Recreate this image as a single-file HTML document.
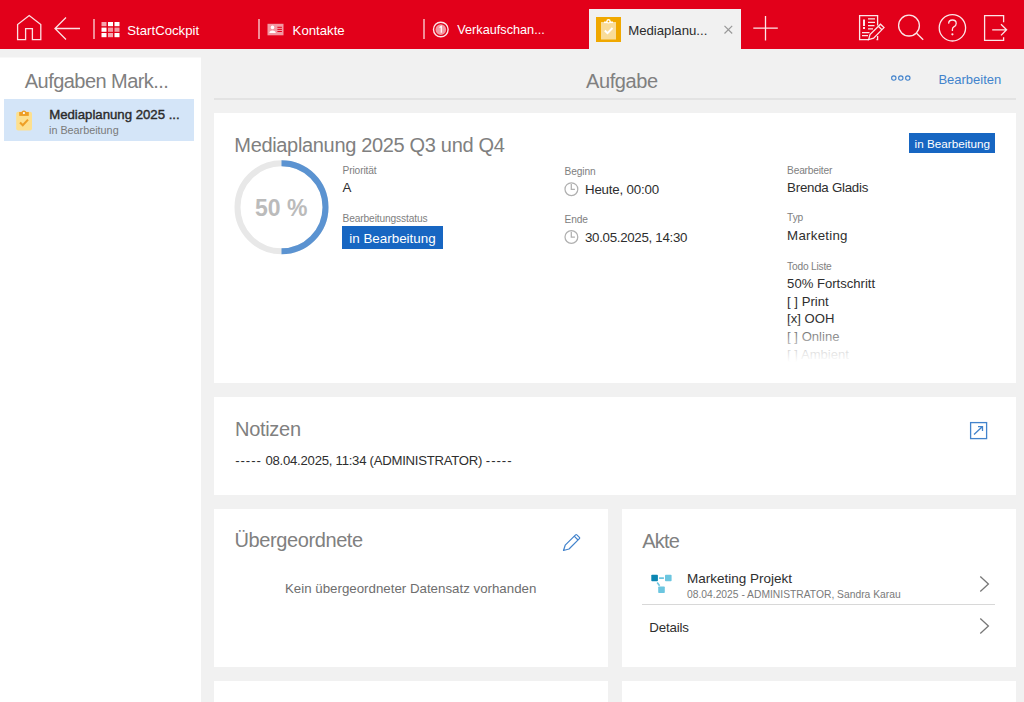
<!DOCTYPE html>
<html><head><meta charset="utf-8">
<style>
*{margin:0;padding:0;box-sizing:border-box}
html,body{width:1024px;height:702px;overflow:hidden;background:#f1f1f1;font-family:"Liberation Sans",sans-serif;color:#222;position:relative}
.abs{position:absolute}
.t{position:absolute;white-space:nowrap;line-height:1}
</style></head><body>
<div class="abs" style="left:0;top:0;width:1024px;height:49px;background:#e2001a"></div>
<svg class="abs" style="left:0;top:0" width="1024" height="49">
<g fill="none" stroke="rgba(255,255,255,.88)" stroke-width="1.3" stroke-linejoin="miter">
<path d="M17.6 39.6 V24.6 L29.2 15.6 L40.8 24.6 V39.6 H32.4 V28.6 H25.6 V39.6 Z"/>
<path d="M80 28.5 H55.5 M66 17.5 L55 28.5 L66 39.5"/>
</g>
<g fill="rgba(255,255,255,.55)">
<rect x="93" y="19" width="2" height="20"/>
<rect x="258" y="19" width="2" height="20"/>
<rect x="423" y="19" width="2" height="20"/>
</g>
<!-- grid -->
<g>
<rect x="101.5" y="22" width="5" height="4.2" fill="rgba(255,255,255,.65)"/>
<rect x="108" y="22" width="5" height="4.2" fill="#fff"/>
<rect x="114.5" y="22" width="5" height="4.2" fill="#fff"/>
<rect x="101.5" y="27.6" width="5" height="4.2" fill="#fff"/>
<rect x="108" y="27.6" width="5" height="4.2" fill="rgba(255,255,255,.6)"/>
<rect x="114.5" y="27.6" width="5" height="4.2" fill="rgba(255,255,255,.6)"/>
<rect x="101.5" y="33" width="5" height="4.2" fill="#fff"/>
<rect x="108" y="33" width="5" height="4.2" fill="rgba(255,255,255,.65)"/>
<rect x="114.5" y="33" width="5" height="4.2" fill="#fff"/>
</g>
<!-- contact card -->
<rect x="267.5" y="23.8" width="16" height="11.5" fill="rgba(255,255,255,.6)"/>
<circle cx="272.5" cy="27.4" r="1.8" fill="#fff"/>
<path d="M269.4 33 Q269.4 30.4 272.5 30.4 Q275.7 30.4 275.7 33 Z" fill="#fff"/>
<g stroke="#e2001a" stroke-width="1"><path d="M277.4 27.3 H281.9 M277.4 29.4 H281.9 M277.4 31.5 H281.9"/></g>
<!-- circle badge -->
<circle cx="440.8" cy="29.5" r="7.3" fill="none" stroke="rgba(255,255,255,.9)" stroke-width="1.4"/>
<circle cx="440.8" cy="29.6" r="5.3" fill="rgba(255,255,255,.6)"/>
<path d="M439.5 27.5 L441.3 26.3 V32.8" stroke="#fff" stroke-width="1.2" fill="none"/>
<!-- active tab -->
<rect x="589" y="9" width="152" height="40" fill="#f1f1f1"/>
<rect x="596" y="17" width="25" height="25" fill="#f0a800"/>
<rect x="601" y="22" width="15" height="17.5" fill="rgba(255,255,255,.6)"/>
<path d="M604 22.3 H613" stroke="#fff" stroke-width="1.6"/>
<circle cx="608.5" cy="21.2" r="2.2" fill="#fff"/>
<circle cx="608.5" cy="21.4" r="0.9" fill="#f0a800"/>
<path d="M604.8 30.5 L607.5 33.2 L612.5 28" fill="none" stroke="#fff" stroke-width="1.9"/>
<path d="M724.5 25.8 L732.2 33.5 M732.2 25.8 L724.5 33.5" stroke="#999" stroke-width="1.2"/>
<path d="M753.3 28.2 H777.8 M765.5 16 V40.4" stroke="rgba(255,255,255,.9)" stroke-width="1.3"/>
<!-- right icons -->
<g fill="none" stroke="rgba(255,255,255,.9)" stroke-width="1.3">
<path d="M869 39.6 H859.6 V15.6 H877.6 V25.5"/>
<path d="M876.5 39.6 H877.6 V36"/>
<path d="M868 18.8 H875 M868 22.3 H875 M868 25.6 H874.5 M868 28.9 H873 M862 32.6 H869.5 M862 35.6 H868"/>
<path d="M868.6 39.6 L870 34.6 L880.5 24.2 L884 27.6 L873.6 38.2 Z M878.4 26.3 L881.9 29.7"/>
<circle cx="909" cy="25.6" r="10.4"/>
<path d="M916.6 33.2 L923.2 39.8"/>
<circle cx="952.4" cy="27.8" r="13.2"/>
<path d="M948.6 23.6 Q948.8 20 952.4 20 Q956.2 20 956.2 23.4 Q956.2 25.6 953.8 26.9 Q952.4 27.7 952.4 29.4 V31"/>
<path d="M1003.6 22.3 V15.6 H984.6 V40.4 H1003.6 V37.2"/>
<path d="M992.2 29.8 H1006.5 M1001 24.2 L1006.6 29.8 L1001 35.4"/>
</g>
<g fill="rgba(255,255,255,.9)">
<rect x="863" y="19.5" width="2" height="6.5"/>
<rect x="863" y="27" width="2" height="2"/>
<circle cx="952.4" cy="34.3" r="1.1"/>
</g>
</svg>
<div class="t" style="left:127.30px;top:24.18px;font-size:13.2px;color:#fff;">StartCockpit</div>
<div class="t" style="left:292.60px;top:23.93px;font-size:13.2px;color:#fff;">Kontakte</div>
<div class="t" style="left:457.30px;top:24.35px;font-size:12.7px;color:#fff;">Verkaufschan...</div>
<div class="t" style="left:628.20px;top:23.93px;font-size:13.2px;color:#2b2b2b;">Mediaplanu...</div>
<div class="abs" style="left:0;top:58px;width:201px;height:644px;background:#fff;box-shadow:0 -1px 0 #f8f8f8"></div>
<div class="t" style="left:24.80px;top:71.47px;font-size:20px;color:#808080;letter-spacing:-0.55px;">Aufgaben Mark...</div>
<div class="abs" style="left:4px;top:99px;width:190px;height:42px;background:#d4e5f8"></div>
<svg class="abs" style="left:0;top:99px" width="60" height="42">
<rect x="16.2" y="12.8" width="15.8" height="18.6" rx="2" fill="#fde08f"/>
<rect x="19.2" y="13" width="9.6" height="3.9" fill="#ee9f25"/>
<circle cx="23.9" cy="14.1" r="2.5" fill="#ee9f25"/>
<circle cx="23.9" cy="14.1" r="1.1" fill="#fff"/>
<path d="M20 23.4 L22.8 26.2 L28 20.6" fill="none" stroke="#ee9f25" stroke-width="2.1"/>
</svg>
<div class="t" style="left:49.20px;top:108.03px;font-size:13.2px;color:#2b2b2b;-webkit-text-stroke:0.4px #2b2b2b;">Mediaplanung 2025 ...</div>
<div class="t" style="left:49.00px;top:124.86px;font-size:10.8px;color:#7a7a7a;">in Bearbeitung</div>
<div class="t" style="left:586.00px;top:70.77px;font-size:20px;color:#808080;letter-spacing:-0.4px;">Aufgabe</div>
<svg class="abs" style="left:880px;top:70px" width="40" height="16">
<g fill="none" stroke="#4283cc" stroke-width="1.1">
<circle cx="13.8" cy="8.1" r="2.2"/><circle cx="20.8" cy="8.1" r="2.2"/><circle cx="27.8" cy="8.1" r="2.2"/>
</g></svg>
<div class="t" style="left:938.40px;top:73.20px;font-size:13px;color:#4283cc;">Bearbeiten</div>
<div class="abs" style="left:214px;top:98px;width:802px;height:2px;background:#e3e3e3"></div>
<div class="abs" style="left:214px;top:113px;width:802px;height:270px;background:#fff"></div>
<div class="t" style="left:234.30px;top:135.07px;font-size:20px;color:#808080;letter-spacing:-0.33px;">Mediaplanung 2025 Q3 und Q4</div>
<svg class="abs" style="left:230px;top:155px" width="104" height="104">
<circle cx="51.5" cy="52.3" r="44" fill="none" stroke="#e8e8e8" stroke-width="6"/>
<path d="M51.5 8.3 A44 44 0 0 1 51.5 96.3" fill="none" stroke="#5b93d1" stroke-width="6"/>
</svg>
<div class="t" style="left:255.00px;top:196.63px;font-size:23px;color:#bbbbbb;font-weight:700;">50 %</div>
<div class="t" style="left:342.50px;top:165.77px;font-size:10.2px;color:#808080;letter-spacing:-0.12px;">Priorität</div>
<div class="t" style="left:342.50px;top:181.14px;font-size:13.3px;color:#2e2e2e;">A</div>
<div class="t" style="left:342.50px;top:213.87px;font-size:10.2px;color:#808080;letter-spacing:-0.12px;">Bearbeitungsstatus</div>
<div class="abs" style="left:342px;top:226px;width:101px;height:23px;background:#1766c2"></div>
<div class="t" style="left:349.30px;top:231.76px;font-size:13.4px;color:#fff;">in Bearbeitung</div>
<div class="t" style="left:564.50px;top:167.47px;font-size:10.2px;color:#808080;letter-spacing:-0.12px;">Beginn</div>
<div class="t" style="left:564.50px;top:215.27px;font-size:10.2px;color:#808080;letter-spacing:-0.12px;">Ende</div>
<svg class="abs" style="left:560px;top:180px" width="24" height="70">
<g fill="none" stroke="#b0b0b0" stroke-width="1.25">
<circle cx="11.4" cy="9.2" r="6.4"/><path d="M11.3 4 V9.4 H14.9"/>
<circle cx="11.4" cy="57" r="6.4"/><path d="M11.3 51.8 V57.2 H14.9"/>
</g></svg>
<div class="t" style="left:585.00px;top:183.34px;font-size:13.3px;color:#2e2e2e;letter-spacing:-0.19px;">Heute, 00:00</div>
<div class="t" style="left:585.00px;top:231.34px;font-size:13.3px;color:#2e2e2e;letter-spacing:-0.3px;">30.05.2025, 14:30</div>
<div class="t" style="left:787.10px;top:165.77px;font-size:10.2px;color:#808080;letter-spacing:-0.2px;">Bearbeiter</div>
<div class="t" style="left:787.10px;top:180.84px;font-size:13.3px;color:#2e2e2e;letter-spacing:-0.25px;">Brenda Gladis</div>
<div class="t" style="left:787.10px;top:213.37px;font-size:10.2px;color:#808080;letter-spacing:-0.12px;">Typ</div>
<div class="t" style="left:787.10px;top:228.54px;font-size:13.3px;color:#2e2e2e;letter-spacing:0.25px;">Marketing</div>
<div class="t" style="left:787.10px;top:262.37px;font-size:10.2px;color:#808080;letter-spacing:-0.2px;">Todo Liste</div>
<div class="abs" style="left:787px;top:272px;width:209px;height:90px;overflow:hidden">
<div class="t" style="left:0.10px;top:5.01px;font-size:13.1px;color:#2e2e2e;">50% Fortschritt</div>
<div class="t" style="left:0.10px;top:22.61px;font-size:13.1px;color:#2e2e2e;">[ ] Print</div>
<div class="t" style="left:0.10px;top:40.41px;font-size:13.1px;color:#2e2e2e;">[x] OOH</div>
<div class="t" style="left:0.10px;top:58.11px;font-size:13.1px;color:#2e2e2e;">[ ] Online</div>
<div class="t" style="left:0.10px;top:75.81px;font-size:13.1px;color:#2e2e2e;">[ ] Ambient</div>
<div class="abs" style="left:0;top:50px;width:209px;height:40px;background:linear-gradient(rgba(255,255,255,.1),rgba(255,255,255,.55) 45%,rgba(255,255,255,.85) 75%,#fff)"></div>
</div>
<div class="abs" style="left:909px;top:133px;width:86px;height:20px;background:#1766c2"></div>
<div class="t" style="left:914.60px;top:138.30px;font-size:11.7px;color:#fff;">in Bearbeitung</div>
<div class="abs" style="left:214px;top:397px;width:802px;height:98px;background:#fff"></div>
<div class="t" style="left:235.00px;top:418.57px;font-size:20px;color:#808080;letter-spacing:-0.3px;">Notizen</div>
<div class="t" style="left:235.20px;top:454.47px;font-size:13.15px;color:#2e2e2e;"><span style="letter-spacing:0.95px">-----</span> <span style="letter-spacing:-0.25px">08.04.2025, 11:34 (ADMINISTRATOR)</span> <span style="letter-spacing:0.95px">-----</span></div>
<svg class="abs" style="left:960px;top:412px" width="40" height="40">
<g fill="none" stroke="#4283cc" stroke-width="1.3">
<rect x="10.6" y="10.6" width="16" height="16"/>
<path d="M14 22.5 L22.5 14.5 M18 14.6 H22.5 V19"/>
</g></svg>
<div class="abs" style="left:214px;top:509px;width:394px;height:158px;background:#fff"></div>
<div class="t" style="left:234.50px;top:530.47px;font-size:20px;color:#808080;letter-spacing:-0.4px;">Übergeordnete</div>
<div class="t" style="left:285.00px;top:582.14px;font-size:13.3px;color:#6e6e6e;">Kein übergeordneter Datensatz vorhanden</div>
<svg class="abs" style="left:555px;top:528px" width="33" height="28">
<g fill="none" stroke="#4283cc" stroke-width="1.2" stroke-linejoin="round">
<path d="M8.5 22.5 L10.2 17.2 L20.6 6.8 Q21.2 6.2 21.8 6.8 L24.4 9.4 Q25 10 24.4 10.6 L14 21 Z"/>
<path d="M19.2 8.2 L23 12"/>
</g></svg>
<div class="abs" style="left:622px;top:509px;width:394px;height:158px;background:#fff"></div>
<div class="t" style="left:642.20px;top:530.87px;font-size:20px;color:#808080;letter-spacing:-0.8px;">Akte</div>
<svg class="abs" style="left:640px;top:565px" width="40" height="36">
<path d="M19.1 13.1 H23.9 M17.2 17.6 L19.6 20.8" stroke="#6cc5e0" stroke-width="1.6"/>
<rect x="11.3" y="9.7" width="6.6" height="6.6" rx="0.8" fill="#0b86b2"/>
<rect x="25" y="9.7" width="6.6" height="6.6" rx="0.8" fill="#6cc6e0"/>
<rect x="18.2" y="21.5" width="6.6" height="6.6" rx="0.8" fill="#6cc6e0"/>
</svg>
<div class="t" style="left:687.00px;top:571.67px;font-size:13.5px;color:#2e2e2e;">Marketing Projekt</div>
<div class="t" style="left:687.00px;top:589.58px;font-size:10.3px;color:#7a7a7a;">08.04.2025 - ADMINISTRATOR, Sandra Karau</div>
<div class="abs" style="left:642px;top:604px;width:353px;height:1px;background:#d8d8d8"></div>
<div class="t" style="left:649.30px;top:621.34px;font-size:13.3px;color:#2e2e2e;letter-spacing:-0.18px;">Details</div>
<svg class="abs" style="left:970px;top:570px" width="30" height="70">
<g fill="none" stroke="#777" stroke-width="1.3">
<path d="M10.3 6.5 L18.4 14 L10.3 21.5"/>
<path d="M10.3 48.5 L18.4 56 L10.3 63.5"/>
</g></svg>
<div class="abs" style="left:214px;top:681px;width:394px;height:30px;background:#fff"></div>
<div class="abs" style="left:622px;top:681px;width:394px;height:30px;background:#fff"></div>
</body></html>
